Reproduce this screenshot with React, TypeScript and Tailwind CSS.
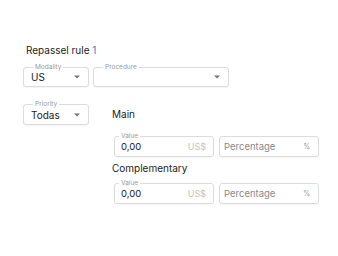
import React from 'react';

const font = { fontFamily: 'Inter, "Noto Sans", sans-serif' };

function Caret() {
    return (
        <svg width="6" height="4" viewBox="0 0 6 4" className="shrink-0">
            <path d="M0 0.5 L6 0.5 L3 3.5 Z" fill="#757575" />
        </svg>
    );
}

function Outlined({ label, labelLeft = 'left-[9px]', className, children }: { label?: string; labelLeft?: string; className: string; children: React.ReactNode }) {
    return (
        <div className={`relative flex items-center rounded-[3px] border border-[#dcdcdc] bg-white shadow-[0_1px_1px_rgba(0,0,0,0.04)] ${className}`}>
            {label && (
                <span className={`absolute -top-[5px] ${labelLeft} bg-white px-[2px] text-[6.5px] leading-[8px] text-[#9a9a9a]`}>
                    {label}
                </span>
            )}
            {children}
        </div>
    );
}

function SelectBox({ label, value, width }: { label: string; value: string; width: string }) {
    return (
        <Outlined label={label} className={`${width} h-[20px] justify-between pl-[7px] pr-[8px]`}>
            <span className="text-[10px] leading-none text-[#222]">{value}</span>
            <Caret />
        </Outlined>
    );
}

function AmountRow() {
    return (
        <div className="ml-[2px] flex gap-[5px]">
            <Outlined label="Value" labelLeft="left-[4px]" className="h-[21px] w-[100px] justify-between pl-[6px] pr-[7px]">
                <span className="text-[9.5px] leading-none text-[#222]">0,00</span>
                <span className="text-[9px] leading-none text-[#c4c4c4]">US$</span>
            </Outlined>
            <Outlined className="h-[21px] w-[100px] justify-between pl-[4px] pr-[8px]">
                <span className="text-[9.5px] leading-none text-[#8a8a8a]">Percentage</span>
                <span className="text-[7px] leading-none text-[#9a9a9a]">%</span>
            </Outlined>
        </div>
    );
}

export default function App() {
    return (
        <div className="h-[256px] w-[338px] bg-white pl-[23px] pt-[44px]" style={font}>
            <h1 className="ml-[3px] text-[10px] leading-[12px] text-[#222]">
                Repassel rule <span className="text-[#3a78c9]">1</span>
            </h1>

            <div className="mt-[11px] flex gap-[4px]">
                <SelectBox label="Modality" value="US" width="w-[66px]" />
                <SelectBox label="Procedure" value="" width="w-[136px]" />
            </div>

            <div className="mt-[17px] flex gap-[23px]">
                <Outlined label="Priority" className="h-[21px] w-[66px] justify-between pl-[7px] pr-[8px]">
                    <span className="text-[10px] leading-none text-[#222]">Todas</span>
                    <Caret />
                </Outlined>

                <div className="flex flex-col pt-[4px]">
                    <p className="text-[10px] leading-[12px] text-[#222]">Main</p>
                    <div className="mt-[16px]">
                        <AmountRow />
                    </div>
                    <p className="mt-[5px] text-[10px] leading-[12px] text-[#222]">Complementary</p>
                    <div className="mt-[9px]">
                        <AmountRow />
                    </div>
                </div>
            </div>
        </div>
    );
}
